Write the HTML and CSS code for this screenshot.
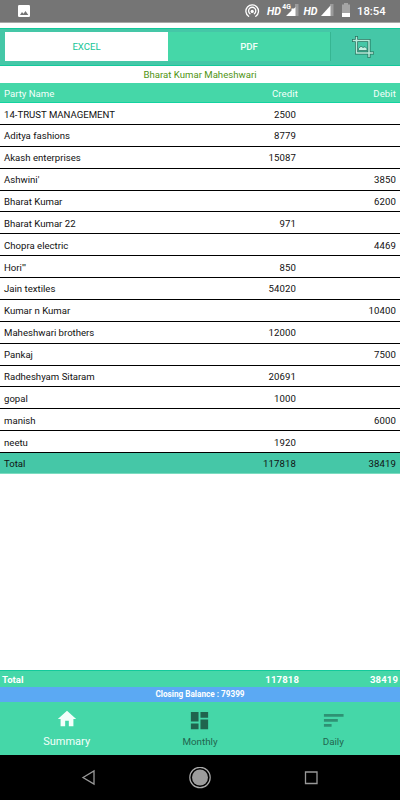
FILE: index.html
```html
<!DOCTYPE html>
<html lang="en">
<head>
    <meta charset="UTF-8">
    <meta name="viewport" content="width=device-width, initial-scale=1.0">
    <title>Summary</title>
    <link rel="stylesheet" href="styles.css">
</head>
<body>
    <div class="status-bar">
        <svg class="status-picture" width="12" height="12" viewBox="0 0 12 12">
            <rect width="12" height="12" rx="1.2" fill="#fff"/>
            <path d="M2 10l2-3 1.5 1.7L7.5 6 10.3 10z" fill="#757575"/>
        </svg>
        <svg width="112" height="24" viewBox="244 0 112 24">
            <g fill="none" stroke="#fff" stroke-width="1.3" stroke-linecap="round">
                <path d="M248.6 17.3a6.3 6.3 0 1 1 7.2 0"/>
                <path d="M250 14.7a3.6 3.6 0 1 1 4.4 0"/>
            </g>
            <circle cx="252.2" cy="12.4" r="1.6" fill="#fff"/>
            <text x="267" y="15.8" class="hd" textLength="14" lengthAdjust="spacingAndGlyphs">HD</text>
            <path d="M295 5h3.5v12H295z" fill="#9b9b9b"/>
            <path d="M286 17l5.5-5.5V9.5h2.5l1.5-1.5V17z" fill="#fff"/>
            <text x="282.300" y="10" class="net" textLength="8.500" lengthAdjust="spacingAndGlyphs">4G</text>
            <text x="303.5" y="15.8" class="hd" textLength="14" lengthAdjust="spacingAndGlyphs">HD</text>
            <path d="M330 5h3.5v12H330z" fill="#9b9b9b"/>
            <path d="M321 17l9.5-10.5V17z" fill="#fff"/>
            <path d="M344 4h4v1.5h2V18h-8V5.5h2z" fill="#a5a5a5"/>
            <path d="M342 14h8v4h-8z" fill="#fff"/>
        </svg>
        <span class="clock">18:54</span>
    </div>

    <div class="export-bar">
        <div class="export-btn excel">EXCEL</div>
        <div class="export-btn pdf">PDF</div>
        <div class="crop-btn">
            <svg width="24" height="24" viewBox="0 0 24 24">
                <g fill="none" stroke="#22705b" stroke-width="3">
                    <path d="M5.5 1v17H23M1 5.5h17V23"/>
                </g>
                <g fill="none" stroke="#b9ecdc" stroke-width="1.5">
                    <path d="M5.5 1.7v16.3H22.3M1.7 5.5h16.3V22.3"/>
                </g>
                <path d="M7.5 15.500v-2l2.500-2.300 2 1.300 2-.8 2 2v1.800z" fill="#c4f0e2" stroke="#22705b" stroke-width=".7"/>
            </svg>
        </div>
    </div>

    <div class="account">Bharat Kumar Maheshwari</div>

    <div class="ledger">
        <div class="row head"><span>Party Name</span><span>Credit</span><span>Debit</span></div>
        <div class="row"><span>14-TRUST MANAGEMENT</span><span>2500</span><span></span></div>
        <div class="row"><span>Aditya fashions</span><span>8779</span><span></span></div>
        <div class="row"><span>Akash enterprises</span><span>15087</span><span></span></div>
        <div class="row"><span>Ashwini'</span><span></span><span>3850</span></div>
        <div class="row"><span>Bharat Kumar</span><span></span><span>6200</span></div>
        <div class="row"><span>Bharat Kumar 22</span><span>971</span><span></span></div>
        <div class="row"><span>Chopra electric</span><span></span><span>4469</span></div>
        <div class="row"><span>Hori'"</span><span>850</span><span></span></div>
        <div class="row"><span>Jain textiles</span><span>54020</span><span></span></div>
        <div class="row"><span>Kumar n Kumar</span><span></span><span>10400</span></div>
        <div class="row"><span>Maheshwari brothers</span><span>12000</span><span></span></div>
        <div class="row"><span>Pankaj</span><span></span><span>7500</span></div>
        <div class="row"><span>Radheshyam Sitaram</span><span>20691</span><span></span></div>
        <div class="row"><span>gopal</span><span>1000</span><span></span></div>
        <div class="row"><span>manish</span><span></span><span>6000</span></div>
        <div class="row"><span>neetu</span><span>1920</span><span></span></div>
        <div class="row total"><span>Total</span><span>117818</span><span>38419</span></div>
    </div>

    <div class="row footer-total"><span>Total</span><span>117818</span><span>38419</span></div>
    <div class="closing">Closing Balance : 79399</div>

    <div class="tabs">
        <div class="tab active">
            <svg width="22" height="22" viewBox="0 0 24 24"><path d="M10 20v-6h4v6h5v-8h3L12 3 2 12h3v8z" fill="#f4fffb"/></svg>
            <span>Summary</span>
        </div>
        <div class="tab">
            <svg width="23" height="23" viewBox="0 0 24 24"><path d="M3 13h8V3H3v10zm0 8h8v-6H3v6zm10 0h8V11h-8v10zm0-18v6h8V3h-8z" fill="#20644e"/></svg>
            <span>Monthly</span>
        </div>
        <div class="tab">
            <svg width="23" height="23" viewBox="0 0 24 24"><path d="M2 5.200h20.500v3H2zM2 10.400h14.500v3H2zM2 15.600h8v3H2z" fill="#2e9274"/></svg>
            <span>Daily</span>
        </div>
    </div>

    <div class="nav-bar">
        <svg width="22" height="22" viewBox="0 0 22 22"><path d="M5 10.5l11-6.5v13z" fill="none" stroke="#999" stroke-width="1.3"/></svg>
        <svg width="22" height="22" viewBox="0 0 22 22"><circle cx="11" cy="10.5" r="10.200" fill="none" stroke="#aaa" stroke-width="1.2"/><circle cx="11" cy="10.5" r="8" fill="#9c9c9c"/></svg>
        <svg width="22" height="22" viewBox="0 0 22 22"><path d="M5.5 5h11.5v11.5H5.5z" fill="none" stroke="#999" stroke-width="1.3"/></svg>
    </div>
</body>
</html>
```
FILE: styles.css
```css
* {
    box-sizing: border-box;
}
body {
    margin: 0;
    height: 800px;
    display: flex;
    flex-direction: column;
    font-family: Roboto, sans-serif;
    font-size: 9.6px;
    color: #111;
    background-color: #fff;
    overflow: hidden;
}
svg {
    display: block;
}
.status-bar {
    height: 23px;
    display: flex;
    align-items: center;
    background-color: #757575;
    border-bottom: 1px solid #a8a8a8;
    color: #fff;
    padding: 0 14px 0 18px;
}
.status-picture {
    margin-right: auto;
}
.hd {
    font-size: 11.5px;
    font-weight: 700;
    font-style: italic;
    fill: #fff;
}
.net {
    font-size: 7.5px;
    font-weight: 700;
    fill: #fff;
}
.clock {
    width: 29px;
    margin-left: 1px;
    padding-top: 1px;
    font-size: 11.3px;
    font-weight: 500;
    white-space: nowrap;
}
.export-bar {
    height: 38px;
    margin-top: 5px;
    padding: 3px 5px 4px;
    display: flex;
    background-color: #45c7a7;
    border-top: 1px solid #13c99b;
    border-bottom: 1px solid #13c99b;
}
.export-btn {
    display: flex;
    align-items: center;
    justify-content: center;
    font-size: 9.6px;
}
.excel {
    width: 163px;
    background-color: #fff;
    color: #14c596;
}
.pdf {
    width: 163px;
    background-color: #45d7a8;
    color: #effff9;
    border-right: 1px solid #36b592;
    font-weight: 500;
}
.crop-btn {
    flex: 1;
    display: flex;
    align-items: center;
    justify-content: center;
}
.account {
    height: 17px;
    line-height: 17px;
    text-align: center;
    color: #4f9413;
    font-size: 9.6px;
}
.row {
    height: 21.87px;
    padding: 1px 4px 0;
    display: grid;
    grid-template-columns: 192px 100px 1fr;
    align-items: center;
    border-bottom: 1px solid #000;
}
.row span + span {
    text-align: right;
    letter-spacing: 0.1px;
}
.head {
    height: 20.2px;
    grid-template-columns: 194px 100px 1fr;
    background-color: #45d7a8;
    border-bottom-color: #13d3a0;
    color: #f4fffb;
}
.total {
    height: 21px;
    background-color: #45c7a7;
    border-bottom-color: #7cdcc0;
}
.footer-total {
    height: 17px;
    margin-top: auto;
    padding: 0 2px;
    grid-template-columns: 197px 100px 1fr;
    background-color: #45d7a8;
    border-top: 1px solid #13c99b;
    border-bottom: 0;
    color: #fff;
    font-weight: 700;
}
.closing {
    height: 15px;
    line-height: 15px;
    text-align: center;
    background-color: #5ba9f3;
    color: #fff;
    font-size: 8.2px;
    font-weight: 700;
}
.tabs {
    height: 53px;
    display: flex;
    background-color: #45d7a8;
    color: #22654f;
}
.tab {
    flex: 1;
    display: flex;
    flex-direction: column;
    align-items: center;
    padding-top: 7px;
    font-size: 9.8px;
}
.tab span {
    margin-top: 4px;
}
.tab.active {
    padding-top: 6px;
    color: #f4fffb;
    font-size: 11px;
}
.tab.active span {
    margin-top: 5px;
}
.nav-bar {
    height: 45px;
    padding: 0 78px;
    display: flex;
    align-items: center;
    justify-content: space-between;
    background-color: #000;
}
```
